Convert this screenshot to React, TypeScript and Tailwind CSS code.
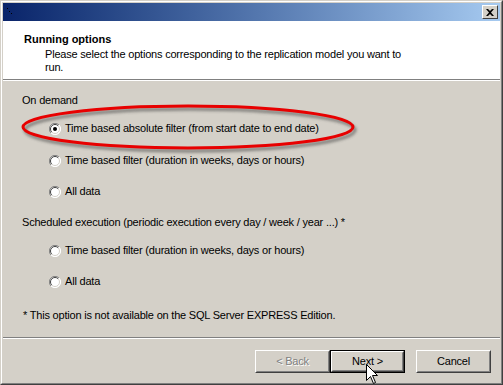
import React from "react";

function Radio({ checked }: { checked?: boolean }) {
    return <svg width="12" height="12" viewBox="0 0 12 12" className="shrink-0">
        <circle cx="6" cy="6" r="5.5" fill="#ffffff" />
        <path d="M10 2 A5.5 5.5 0 0 0 2 10" fill="none" stroke="#808080" strokeWidth="1" />
        <path d="M9.2 2.8 A4.5 4.5 0 0 0 2.8 9.2" fill="none" stroke="#404040" strokeWidth="1" />
        <path d="M2 10 A5.5 5.5 0 0 0 10 2" fill="none" stroke="#ffffff" strokeWidth="1" />
        <path d="M2.8 9.2 A4.5 4.5 0 0 0 9.2 2.8" fill="none" stroke="#d4d0c8" strokeWidth="1" />
        {checked && <circle cx="6" cy="6" r="2" fill="#000000" />}
    </svg>
}

function Option({ label, checked, className }: { label: string; checked?: boolean; className?: string }) {
    return <div className={"flex items-center h-[13px] pl-[46px] " + (className || "")}>
        <Radio checked={checked} />
        <span className="ml-[4px]">{label}</span>
    </div>
}

function Button({ label, isDefault, disabled, className }: { label: string; isDefault?: boolean; disabled?: boolean; className?: string }) {
    return <div className={"w-[75px] h-[23px] " + (isDefault ? "border border-black " : "") + (className || "")}>
        <div className="w-full h-full border border-t-white border-l-white border-r-[#404040] border-b-[#404040]">
            <div className="w-full h-full border border-t-[#d4d0c8] border-l-[#d4d0c8] border-r-[#808080] border-b-[#808080] flex items-center justify-center">
                {disabled
                    ? <span className="text-[#808080] [text-shadow:1px_1px_0_#ffffff]">{label}</span>
                    : <span className="text-black">{label}</span>}
            </div>
        </div>
    </div>
}

export default function App() {
    return <div className="relative w-[503px] h-[385px] overflow-hidden text-[11px] leading-[13px] tracking-[-0.2px] text-black" style={{ fontFamily: '"Liberation Sans", Arial, sans-serif' }}>
        <div className="w-full h-full border border-t-[#d4d0c8] border-l-[#d4d0c8] border-r-[#404040] border-b-[#404040]">
            <div className="w-full h-full border border-t-white border-l-white border-r-[#808080] border-b-[#808080]">
                <div className="w-full h-full border border-[#d4d0c8] bg-[#d4d0c8] flex flex-col">
                    {/* title bar */}
                    <div className="relative h-[18px] shrink-0 bg-gradient-to-r from-[#0a246a] to-[#a6caf0] flex items-center justify-end pr-[2px]">
                        <svg width="6" height="8" className="absolute left-[4px] top-[5px]">
                            <rect x="0" y="0" width="1" height="1" fill="#000" />
                            <rect x="2" y="3" width="1" height="1" fill="#000" />
                            <rect x="4" y="5" width="1" height="1" fill="#000" />
                        </svg>
                        <div className="w-[16px] h-[14px] bg-[#d4d0c8] border border-t-white border-l-white border-r-[#404040] border-b-[#404040] flex items-center justify-center">
                            <svg width="8" height="7" viewBox="0 0 8 7">
                                <path d="M0 0 L2 0 L4 2 L6 0 L8 0 L5 3.5 L8 7 L6 7 L4 5 L2 7 L0 7 L3 3.5 Z" fill="#000" />
                            </svg>
                        </div>
                    </div>
                    {/* header */}
                    <div className="h-[59px] shrink-0 bg-white pt-[12px] border-b border-[#808080]">
                        <div className="pl-[21px] font-bold tracking-normal">Running options</div>
                        <div className="pl-[42px] mt-[2px] w-[415px]">Please select the options corresponding to the replication model you want to run.</div>
                    </div>
                    <div className="h-px bg-white shrink-0" />
                    {/* body */}
                    <div className="flex-1 flex flex-col pt-[13px]">
                        <div className="pl-[19px] h-[13px]">On demand</div>
                        <Option label="Time based absolute filter (from start date to end date)" checked className="mt-[15px]" />
                        <Option label="Time based filter (duration in weeks, days or hours)" className="mt-[19px]" />
                        <Option label="All data" className="mt-[18px]" />
                        <div className="pl-[19px] h-[13px] mt-[18px]">Scheduled execution (periodic execution every day / week / year ...) *</div>
                        <Option label="Time based filter (duration in weeks, days or hours)" className="mt-[15px]" />
                        <Option label="All data" className="mt-[18px]" />
                        <div className="pl-[20px] h-[13px] mt-[21px]">* This option is not available on the SQL Server EXPRESS Edition.</div>
                    </div>
                    <div className="h-px bg-[#808080] shrink-0" />
                    <div className="h-px bg-white shrink-0" />
                    {/* buttons */}
                    <div className="h-[43px] shrink-0 flex justify-end pt-[11px] pr-[9px]">
                        <Button label="< Back" disabled />
                        <Button label="Next >" isDefault />
                        <Button label="Cancel" className="ml-[11px]" />
                    </div>
                </div>
            </div>
        </div>
        {/* red annotation */}
        <svg className="absolute left-0 top-0 pointer-events-none" width="503" height="385">
            <defs>
                <filter id="sh" x="-10%" y="-50%" width="120%" height="200%">
                    <feGaussianBlur stdDeviation="1.5" />
                </filter>
            </defs>
            <ellipse cx="190" cy="130" rx="165" ry="21" fill="none" stroke="#404040" strokeWidth="3" opacity="0.6" filter="url(#sh)" />
            <ellipse cx="188" cy="127" rx="165" ry="21" fill="none" stroke="#e80000" strokeWidth="3" />
        </svg>
        {/* cursor */}
        <svg className="absolute left-[366px] top-[364px]" width="13" height="21" viewBox="0 0 13 21">
            <path d="M0.5 0.5 L0.5 16.5 L4.5 12.5 L7.5 19.5 L9.5 18.5 L6.5 11.5 L11.5 11.5 Z" fill="#ffffff" stroke="#000000" strokeWidth="1" />
        </svg>
    </div>
}
